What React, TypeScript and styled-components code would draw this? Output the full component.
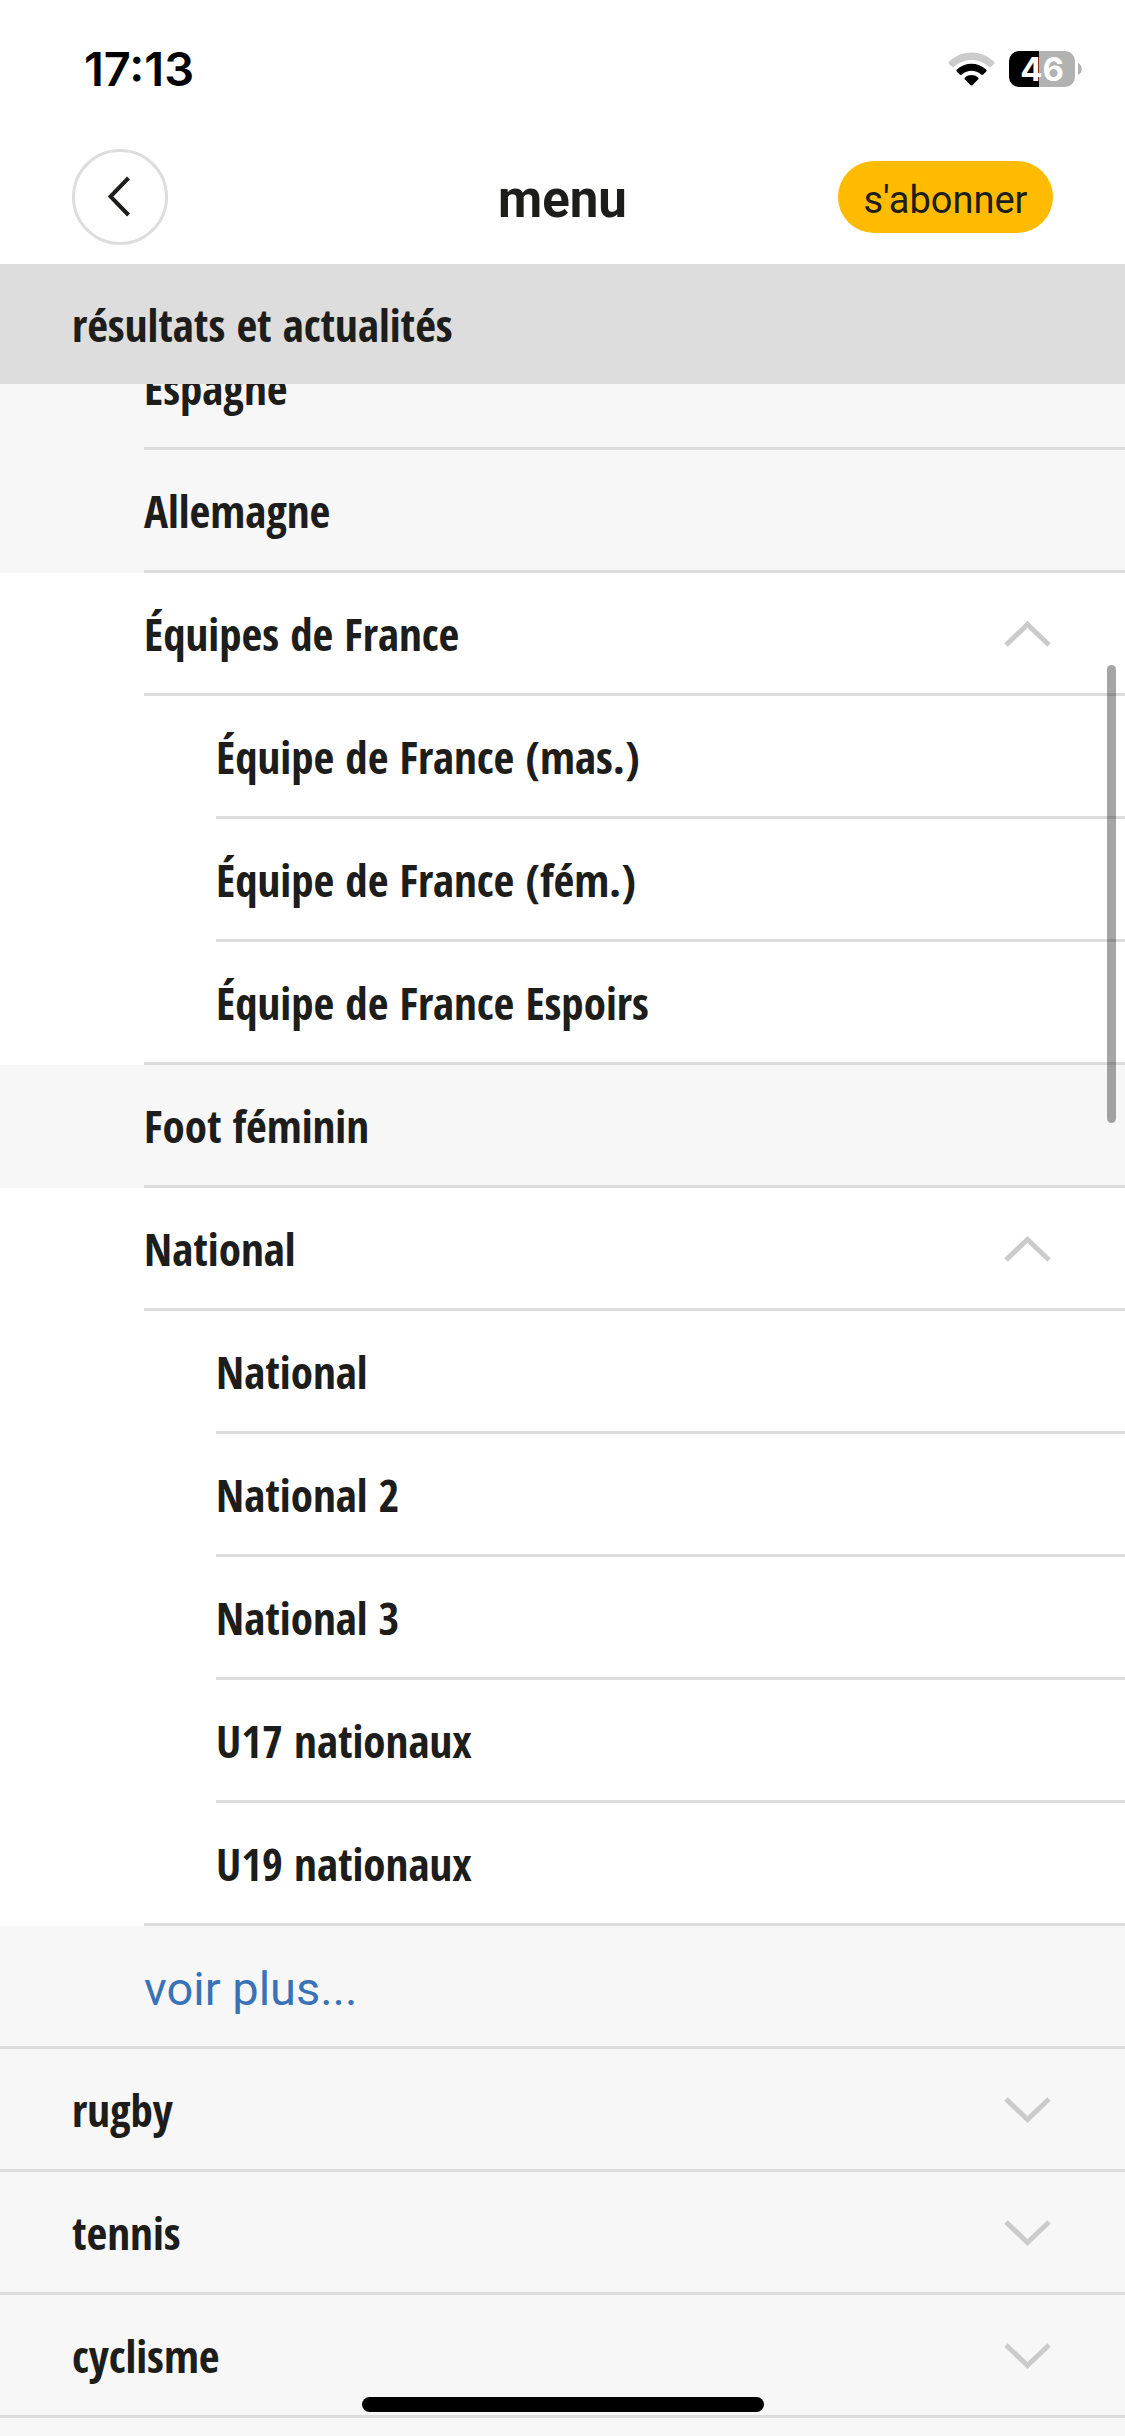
import React, { useLayoutEffect, useRef } from "react";
import styled, { createGlobalStyle, css } from "styled-components";

const colors = {
  ink: "#1d1d1b",
  line: "#dddddd",
  muted: "#f7f7f7",
  chevron: "#cbcbcb",
  accent: "#ffbb00",
  link: "#3a73b5",
};

const condensed = '"Open Sans Condensed", "Roboto Condensed", Roboto, sans-serif';
const regular = 'Roboto, "Open Sans", sans-serif';

const GlobalStyle = createGlobalStyle`
  *, *::before, *::after { box-sizing: border-box; }
  body { margin: 0; background: #fff; color: ${colors.ink}; }
`;

const Screen = styled.div`
  position: relative;
  display: flex;
  flex-direction: column;
  height: 100vh;
  background: #fff;
  overflow: hidden;
`;

const StatusBar = styled.div`
  display: flex;
  align-items: center;
  justify-content: space-between;
  height: 138px;
  padding: 0 43px 0 84px;
  flex: none;
`;

const Clock = styled.time`
  font: 600 47px/56px Inter, sans-serif;
  color: #000;
`;

const StatusIcons = styled.div`
  display: flex;
  align-items: center;
  gap: 14px;
`;

const Battery = styled.div`
  display: flex;
  align-items: center;
  gap: 3px;
`;

const BatteryBody = styled.div<{ $level: number }>`
  display: flex;
  align-items: center;
  justify-content: center;
  width: 66px;
  height: 36px;
  border-radius: 10px;
  background: linear-gradient(to right, #000 ${(p) => p.$level}%, #b2b2b2 ${(p) => p.$level}%);
  color: #fff;
  font: 700 33px/36px Inter, sans-serif;
`;

const Header = styled.header`
  display: grid;
  grid-template-columns: 1fr auto 1fr;
  align-items: center;
  height: 126px;
  padding: 0 72px 8px;
  flex: none;
`;

const BackButton = styled.button`
  display: flex;
  align-items: center;
  justify-content: center;
  width: 96px;
  height: 96px;
  padding: 0;
  border: 3px solid ${colors.line};
  border-radius: 50%;
  background: #fff;
`;

const Title = styled.h1`
  margin: 0;
  padding-top: 6px;
  font: 700 51px/60px ${regular};
`;

const Subscribe = styled.button`
  justify-self: end;
  width: 215px;
  height: 72px;
  padding: 6px 0 0;
  border: 0;
  border-radius: 36px;
  background: ${colors.accent};
  color: ${colors.ink};
  font: 400 38px/60px ${regular};
`;

const SectionTitle = styled.h2`
  display: flex;
  align-items: center;
  height: 120px;
  margin: 0;
  padding: 2px 72px 0;
  flex: none;
  background: ${colors.line};
  font: 700 45px/60px ${condensed};
`;

const Scroller = styled.nav`
  flex: 1;
  min-height: 0;
  overflow-y: auto;
  background: ${colors.muted};
  scrollbar-width: none;
`;

const List = styled.ul`
  margin: 0;
  padding: 0 0 40px;
  list-style: none;
`;

const Item = styled.li<{ $open?: boolean; $line: number }>`
  padding-left: ${(p) => p.$line * 72}px;
  background: ${(p) => (p.$open ? "#fff" : colors.muted)};
`;

const rowStyle = css<{ $indent: number }>`
  display: flex;
  align-items: center;
  justify-content: space-between;
  width: 100%;
  height: 123px;
  padding: 2px 72px 0 ${(p) => p.$indent * 72}px;
  border: 0;
  border-bottom: 3px solid ${colors.line};
  background: none;
  color: ${colors.ink};
  font: 700 45px/60px ${condensed};
  text-align: left;
  text-decoration: none;
`;

const RowLink = styled.a<{ $indent: number }>`
  ${rowStyle}
`;

const RowButton = styled.button<{ $indent: number }>`
  ${rowStyle}
`;

const MoreLink = styled(RowLink)`
  padding-top: 6px;
  color: ${colors.link};
  font: 400 47px/60px ${regular};
`;

const ScrollThumb = styled.div`
  position: absolute;
  top: 665px;
  right: 9px;
  width: 9px;
  height: 458px;
  border-radius: 5px;
  background: rgba(0, 0, 0, 0.35);
`;

const HomeIndicator = styled.div`
  position: absolute;
  bottom: 24px;
  left: 50%;
  width: 402px;
  height: 15px;
  margin-left: -201px;
  border-radius: 8px;
  background: #000;
`;

function WifiIcon() {
  return (
    <svg width="47" height="34" viewBox="0 0 47 34" aria-hidden="true">
      <path
        d="M1.1 9.6 C13.5 -2.6 33.5 -2.6 45.9 9.6 C46.7 10.4 46.7 11.3 46 12 L43.1 14.7 C42.4 15.4 41.6 15.3 40.9 14.7 C31.2 5.6 15.8 5.6 6.1 14.7 C5.4 15.3 4.6 15.4 3.9 14.7 L1 12 C0.3 11.3 0.3 10.4 1.1 9.6 Z"
        fill="#cccccc"
      />
      <path
        d="M8.9 17.6 C17 9.9 30 9.9 38.1 17.6 C38.8 18.3 38.8 19.1 38.1 19.7 L35.2 22.5 C34.5 23.2 33.7 23.1 33 22.5 C27.7 17.6 19.3 17.6 14 22.5 C13.3 23.1 12.5 23.2 11.8 22.5 L8.9 19.7 C8.2 19.1 8.2 18.3 8.9 17.6 Z"
        fill="#000"
      />
      <path
        d="M17.1 25.4 C20.7 22.3 26.3 22.3 29.9 25.4 C30.7 26.1 30.7 26.9 30 27.6 L24.6 32.9 C23.9 33.6 23.1 33.6 22.4 32.9 L17 27.6 C16.3 26.9 16.3 26.1 17.1 25.4 Z"
        fill="#000"
      />
    </svg>
  );
}

function Chevron({ up }: { up?: boolean }) {
  return (
    <svg width="49" height="28" viewBox="0 0 49 28" fill="none" stroke={colors.chevron} strokeWidth="5" aria-hidden="true">
      <path d={up ? "M2 25 L23.5 4.5 L45 25" : "M2 3 L23.5 23.5 L45 3"} />
    </svg>
  );
}

type Entry = {
  label: string;
  /** Indent level of the text, in steps of 72px. */
  level: number;
  /** Indent level of the divider below, when it differs from the text. */
  line?: number;
  open?: boolean;
  toggle?: "open" | "closed";
  more?: boolean;
};

const entries: Entry[] = [
  { label: "Espagne", level: 2 },
  { label: "Allemagne", level: 2 },
  { label: "Équipes de France", level: 2, open: true, toggle: "open" },
  { label: "Équipe de France (mas.)", level: 3, open: true },
  { label: "Équipe de France (fém.)", level: 3, open: true },
  { label: "Équipe de France Espoirs", level: 3, line: 2, open: true },
  { label: "Foot féminin", level: 2 },
  { label: "National", level: 2, open: true, toggle: "open" },
  { label: "National", level: 3, open: true },
  { label: "National 2", level: 3, open: true },
  { label: "National 3", level: 3, open: true },
  { label: "U17 nationaux", level: 3, open: true },
  { label: "U19 nationaux", level: 3, line: 2, open: true },
  { label: "voir plus...", level: 2, line: 0, more: true },
  { label: "rugby", level: 1, line: 0, toggle: "closed" },
  { label: "tennis", level: 1, line: 0, toggle: "closed" },
  { label: "cyclisme", level: 1, line: 0, toggle: "closed" },
];

function MenuEntry({ entry }: { entry: Entry }) {
  const line = entry.line ?? entry.level;
  const indent = entry.level - line;
  const Leaf = entry.more ? MoreLink : RowLink;
  return (
    <Item $open={entry.open} $line={line}>
      {entry.toggle ? (
        <RowButton type="button" $indent={indent} aria-expanded={entry.toggle === "open"}>
          {entry.label}
          <Chevron up={entry.toggle === "open"} />
        </RowButton>
      ) : (
        <Leaf href="#" $indent={indent}>
          {entry.label}
        </Leaf>
      )}
    </Item>
  );
}

export default function App() {
  const scroller = useRef<HTMLElement>(null);

  // The menu opens slightly scrolled, with its first row under the section title.
  useLayoutEffect(() => {
    if (scroller.current) scroller.current.scrollTop = 57;
  }, []);

  return (
    <Screen>
      <GlobalStyle />
      <StatusBar>
        <Clock>17:13</Clock>
        <StatusIcons>
          <WifiIcon />
          <Battery>
            <BatteryBody $level={46}>46</BatteryBody>
            <svg width="4" height="12" viewBox="0 0 4 12" aria-hidden="true">
              <path d="M0 0 C5 2 5 10 0 12 Z" fill="#b2b2b2" />
            </svg>
          </Battery>
        </StatusIcons>
      </StatusBar>
      <Header>
        <BackButton type="button" aria-label="retour">
          <svg width="24" height="42" viewBox="0 0 24 42" fill="none" stroke={colors.ink} strokeWidth="4" aria-hidden="true">
            <path d="M20.5 2 L2.5 20.5 L20.5 39" />
          </svg>
        </BackButton>
        <Title>menu</Title>
        <Subscribe type="button">s'abonner</Subscribe>
      </Header>
      <SectionTitle>résultats et actualités</SectionTitle>
      <Scroller ref={scroller} aria-label="menu">
        <List>
          {entries.map((entry) => (
            <MenuEntry key={`${entry.level}-${entry.label}`} entry={entry} />
          ))}
        </List>
      </Scroller>
      <ScrollThumb />
      <HomeIndicator />
    </Screen>
  );
}
